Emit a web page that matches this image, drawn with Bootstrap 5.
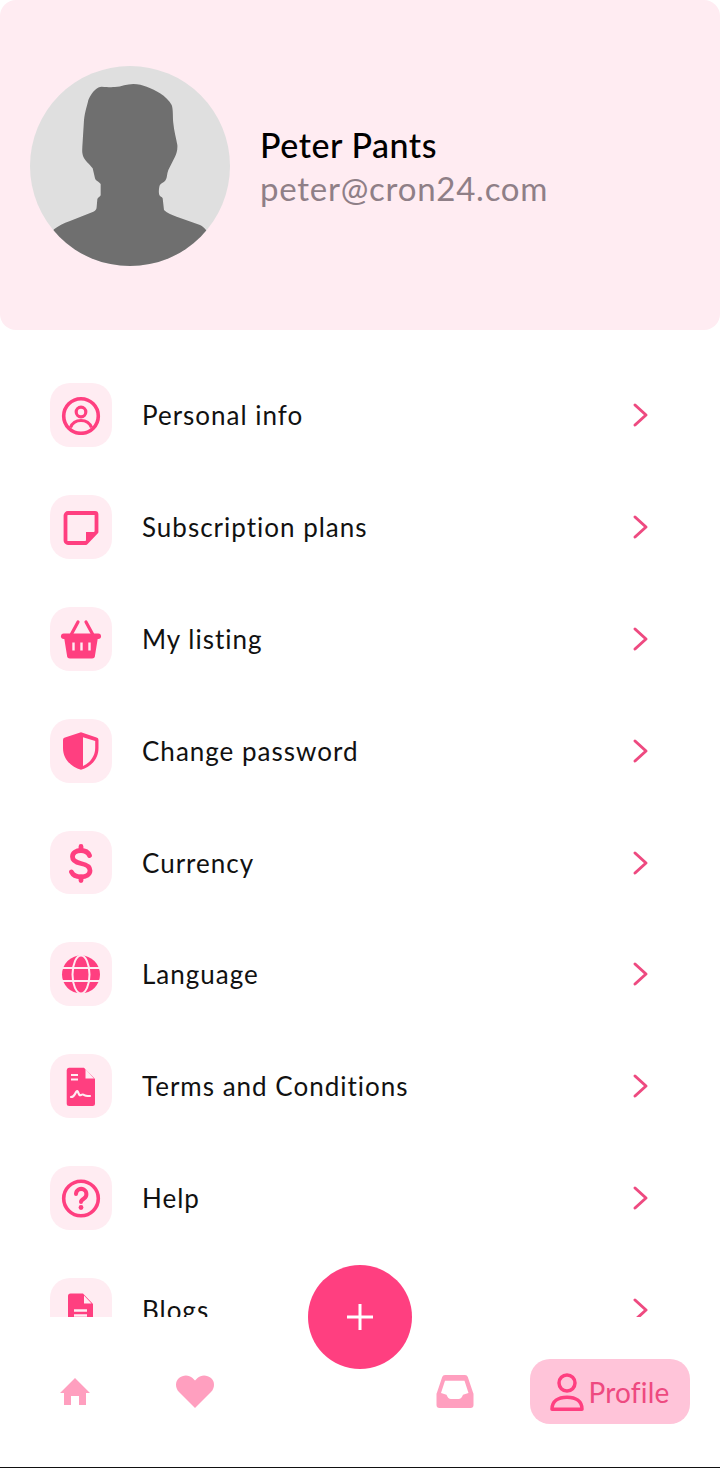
<!DOCTYPE html>
<html lang="en">
<head>
    <meta charset="UTF-8">
    <meta name="viewport" content="width=device-width, initial-scale=1.0">
    <title>Profile</title>
    <link href="https://cdn.jsdelivr.net/npm/bootstrap@5.3.0/dist/css/bootstrap.min.css" rel="stylesheet">
    <style>
        html, body { height: 100%; }
        body { font-family: "Lato", "Noto Sans", sans-serif; background: #fff; color: #111; }
        .app-shell { height: 1468px; border-bottom: 1px solid #111; position: relative; overflow: hidden; }
        .profile-head { height: 330px; background: #ffecf2; border-radius: 16px; padding: 66px 30px 0; }
        .head-inner { gap: 30px; }
        .avatar-pic { width: 200px; height: 200px; flex: none; display: block; border-radius: 50%; }
        .head-name { font-size: 34px; line-height: 44px; color: #000; font-weight: 500; letter-spacing: .55px; }
        .head-mail { font-size: 33px; line-height: 42px; color: #8f7f87; letter-spacing: .75px; }
        .menu-area { height: 987px; overflow: hidden; padding: 53px 70px 0 50px; }
        .menu-line { height: 63.9px; margin-bottom: 48px; gap: 30px; }
        .menu-tile { width: 62px; height: 63.9px; flex: none; background: #ffecf2; border-radius: 20px; }
        .menu-text { font-size: 26px; letter-spacing: 1px; color: #111; padding-top: 1px; }
        .menu-go { width: 20px; height: 26px; flex: none; }
        .bottom-bar { height: 150px; padding: 42px 30px 0; gap: 30px; }
        .bar-cell { width: 90px; height: 65px; }
        .bar-gap { width: 110px; }
        .bar-pill { width: 160px; height: 65px; background: #ffc4d9; border-radius: 20px; gap: 4px; color: #ee4a80; font-size: 28px; letter-spacing: .2px; }
        .add-btn { position: absolute; left: 308px; top: 1265px; width: 104px; height: 104px; background: #ff3f80; border-radius: 50%; }
    </style>
</head>
<body>
    <div class="app-shell">
        <div class="profile-head">
            <div class="head-inner d-flex align-items-center">
                <svg class="avatar-pic" viewBox="0 0 600 600">
                    <rect width="600" height="600" fill="#dfdfdf"/>
                    <path fill="#6f6f6f" d="M72 490C85 480 100 472 120 465L190 437C198 433 200 428 200 422L202 400C203 394 212 392 212 387L212 354C205 345 197 345 195 337L188 307C180 295 165 285 160 272C155 260 157 250 157 242L162 162C165 135 172 118 175 102C180 90 188 78 195 72C203 65 208 62 215 62C230 63 242 64 255 63C275 62 290 54 310 54C325 54 338 58 350 62C365 68 378 74 390 82C405 92 418 104 425 117C430 130 428 155 430 172C432 195 438 215 442 237C443 250 440 262 435 272L415 312C410 325 412 335 407 342C402 350 390 352 388 362C386 372 386 382 388 387C390 392 396 392 398 397L402 432C410 440 425 447 440 452L510 477C518 481 523 486 528 492L600 600H0Z"/>
                </svg>
                <div>
                    <div class="head-name">Peter Pants</div>
                    <div class="head-mail">peter@cron24.com</div>
                </div>
            </div>
        </div>

        <div class="menu-area">
            <div class="menu-line d-flex align-items-center">
                <div class="menu-tile d-flex align-items-center justify-content-center">
                    <svg width="40" height="40" viewBox="0 0 40 40" fill="none" stroke="#ff3f80" stroke-width="3.600">
                        <circle cx="20" cy="21" r="17.300"/>
                        <circle cx="20" cy="17" r="4.800" stroke-width="3.200"/>
                        <path stroke-width="3.200" d="M9.500 32.500c2-5 6-7 10.500-7s8.500 2 10.500 7"/>
                    </svg>
                </div>
                <div class="menu-text flex-grow-1">Personal info</div>
                <svg class="menu-go" viewBox="0 0 20 26" fill="none" stroke="#ee4a80" stroke-width="3" stroke-linecap="round" stroke-linejoin="round"><path d="M5 3l11 10-11 10"/></svg>
            </div>
            <div class="menu-line d-flex align-items-center">
                <div class="menu-tile d-flex align-items-center justify-content-center">
                    <svg width="40" height="40" viewBox="0 0 40 40">
                        <path fill="none" stroke="#ff3f80" stroke-width="3.800" stroke-linejoin="round" d="M7 6h27a1.500 1.500 0 0 1 1.500 1.500V25L25 36H7a2.500 2.500 0 0 1-2.500-2.500V8.500A2.500 2.500 0 0 1 7 6z"/>
                        <path fill="#ff3f80" d="M25 25h12L25 37.500z"/>
                    </svg>
                </div>
                <div class="menu-text flex-grow-1">Subscription plans</div>
                <svg class="menu-go" viewBox="0 0 20 26" fill="none" stroke="#ee4a80" stroke-width="3" stroke-linecap="round" stroke-linejoin="round"><path d="M5 3l11 10-11 10"/></svg>
            </div>
            <div class="menu-line d-flex align-items-center">
                <div class="menu-tile d-flex align-items-center justify-content-center">
                    <svg width="42" height="40" viewBox="0 0 42 40">
                        <path fill="none" stroke="#ff3f80" stroke-width="3.200" stroke-linecap="round" d="M18 3l-6.500 12M26 3l6.500 12"/>
                        <rect x="1" y="14.500" width="40" height="5.500" rx="2.700" fill="#ff3f80"/>
                        <path fill="#ff3f80" d="M4 18h34l-3 18.500a3 3 0 0 1-3 3H10a3 3 0 0 1-3-3z"/>
                        <path fill="none" stroke="#ffecf2" stroke-width="2.400" d="M13.500 23.500v8M21.500 23.500v8M29.500 23.500v8"/>
                    </svg>
                </div>
                <div class="menu-text flex-grow-1">My listing</div>
                <svg class="menu-go" viewBox="0 0 20 26" fill="none" stroke="#ee4a80" stroke-width="3" stroke-linecap="round" stroke-linejoin="round"><path d="M5 3l11 10-11 10"/></svg>
            </div>
            <div class="menu-line d-flex align-items-center">
                <div class="menu-tile d-flex align-items-center justify-content-center">
                    <svg width="40" height="40" viewBox="0 0 40 40">
                        <path fill="#ff3f80" d="M20 1.200L35.500 6.500a2.500 2.500 0 0 1 2 2.500V17C37.500 28 30 36 20 38.800C10 36 2 28 2 17V9a2.500 2.500 0 0 1 2-2.500z"/>
                        <path fill="#ffecf2" d="M22 6.200L34.200 10V17C34.200 25 29 32 22 35z"/>
                    </svg>
                </div>
                <div class="menu-text flex-grow-1">Change password</div>
                <svg class="menu-go" viewBox="0 0 20 26" fill="none" stroke="#ee4a80" stroke-width="3" stroke-linecap="round" stroke-linejoin="round"><path d="M5 3l11 10-11 10"/></svg>
            </div>
            <div class="menu-line d-flex align-items-center">
                <div class="menu-tile d-flex align-items-center justify-content-center">
                    <svg width="40" height="40" viewBox="0 0 40 40" fill="none" stroke="#ff3f80" stroke-width="4.800" stroke-linecap="round">
                        <path d="M28.500 12.500C27 9 24 7.500 20 7.500C15 7.500 11.500 10 11.500 13.800C11.500 18 15 19.500 20 20.500C25 21.500 29 23 29 27.500C29 31.500 25 33.800 20 33.800C15.500 33.800 12 32.300 10.500 29"/>
                        <path d="M20 3.500V7.500M20 33.800V37.500"/>
                    </svg>
                </div>
                <div class="menu-text flex-grow-1">Currency</div>
                <svg class="menu-go" viewBox="0 0 20 26" fill="none" stroke="#ee4a80" stroke-width="3" stroke-linecap="round" stroke-linejoin="round"><path d="M5 3l11 10-11 10"/></svg>
            </div>
            <div class="menu-line d-flex align-items-center">
                <div class="menu-tile d-flex align-items-center justify-content-center">
                    <svg width="40" height="40" viewBox="0 0 40 40">
                        <circle cx="20" cy="20.500" r="19" fill="#ff3f80"/>
                        <g fill="none" stroke="#ffecf2" stroke-width="2">
                            <ellipse cx="20" cy="20.500" rx="8.500" ry="19"/>
                            <path d="M1 14h38M1 27h38"/>
                        </g>
                    </svg>
                </div>
                <div class="menu-text flex-grow-1">Language</div>
                <svg class="menu-go" viewBox="0 0 20 26" fill="none" stroke="#ee4a80" stroke-width="3" stroke-linecap="round" stroke-linejoin="round"><path d="M5 3l11 10-11 10"/></svg>
            </div>
            <div class="menu-line d-flex align-items-center">
                <div class="menu-tile d-flex align-items-center justify-content-center">
                    <svg width="40" height="40" viewBox="0 0 40 40">
                        <path fill="#ff3f80" d="M8 1.700H23L34 13V37.500a2.500 2.500 0 0 1-2.500 2.500H8.200a2.500 2.500 0 0 1-2.500-2.500V4.200A2.500 2.500 0 0 1 8 1.700z"/>
                        <path fill="#ffecf2" d="M24.500 3L33 12.500H24.500z"/>
                        <g fill="none" stroke="#ffecf2" stroke-width="2.200">
                            <path d="M10 9h7M10 13.500h7"/>
                            <path d="M10 31c2 0 3-1 4-3s2-4 3-2 1 4 3 3 2-1 3 0 3 1 6 1" stroke-linecap="round"/>
                        </g>
                    </svg>
                </div>
                <div class="menu-text flex-grow-1">Terms and Conditions</div>
                <svg class="menu-go" viewBox="0 0 20 26" fill="none" stroke="#ee4a80" stroke-width="3" stroke-linecap="round" stroke-linejoin="round"><path d="M5 3l11 10-11 10"/></svg>
            </div>
            <div class="menu-line d-flex align-items-center">
                <div class="menu-tile d-flex align-items-center justify-content-center">
                    <svg width="40" height="40" viewBox="0 0 40 40" fill="none" stroke="#ff3f80" stroke-width="3.600">
                        <circle cx="20" cy="20.500" r="17.300"/>
                        <path stroke-linecap="round" stroke-width="4" d="M15 16a5.200 5.200 0 1 1 8 4.500c-2 1.300-3 2-3 3.500"/>
                        <circle cx="20" cy="29.500" r="2.400" fill="#ff3f80" stroke="none"/>
                    </svg>
                </div>
                <div class="menu-text flex-grow-1">Help</div>
                <svg class="menu-go" viewBox="0 0 20 26" fill="none" stroke="#ee4a80" stroke-width="3" stroke-linecap="round" stroke-linejoin="round"><path d="M5 3l11 10-11 10"/></svg>
            </div>
            <div class="menu-line d-flex align-items-center">
                <div class="menu-tile d-flex align-items-center justify-content-center">
                    <svg width="40" height="40" viewBox="0 0 40 40">
                        <path fill="#ff3f80" d="M9.500 3.500H22L32 14V36a2.500 2.500 0 0 1-2.500 2.500H9.500A2.500 2.500 0 0 1 7 36V6a2.500 2.500 0 0 1 2.500-2.500z"/>
                        <path fill="#ffecf2" d="M23 5.500L30.500 13.500H23z"/>
                        <path fill="none" stroke="#ffecf2" stroke-width="2.500" d="M13 20.500h13M13 25.500h13"/>
                    </svg>
                </div>
                <div class="menu-text flex-grow-1">Blogs</div>
                <svg class="menu-go" viewBox="0 0 20 26" fill="none" stroke="#ee4a80" stroke-width="3" stroke-linecap="round" stroke-linejoin="round"><path d="M5 3l11 10-11 10"/></svg>
            </div>
        </div>

        <div class="bottom-bar d-flex">
            <div class="bar-cell d-flex align-items-center justify-content-center">
                <svg width="30" height="27" viewBox="0 0 30 27"><path fill="#ff9fbf" d="M15 0L30 15h-4v12h-7v-9h-8v9H4V15H0z"/></svg>
            </div>
            <div class="bar-cell d-flex align-items-center justify-content-center">
                <svg width="38" height="33" viewBox="0 0 38 33"><path fill="#ff9fbf" d="M19 33L3 17C-1 12.500-1 6.500 3 3c4-3.500 10-3.500 13.500 0L19 5.500 21.500 3C25-.5 31-.5 35 3c4 3.500 4 9.500 0 14z"/></svg>
            </div>
            <div class="bar-gap"></div>
            <div class="bar-cell d-flex align-items-center justify-content-center">
                <svg width="38" height="33" viewBox="0 0 38 33">
                    <path fill="#ff9fbf" d="M9 0H29a3 3 0 0 1 2.800 2L37 17.500a3 3 0 0 1 .5 2V30a3 3 0 0 1-3 3H3.500a3 3 0 0 1-3-3V19.500a3 3 0 0 1 .5-2L6.200 2A3 3 0 0 1 9 0z"/>
                    <path fill="#fff" d="M9 5.700H28.500L32.500 18 27 19.700C26 22.500 24.500 24 22.500 24H15C13 24 11.500 22.500 10.500 19.700L5 18z"/>
                </svg>
            </div>
            <div class="bar-pill d-flex align-items-center justify-content-center">
                <svg width="34" height="38" viewBox="0 0 34 38" fill="none" stroke="#ff3f80" stroke-width="3.500">
                    <circle cx="17" cy="10" r="8"/>
                    <path stroke-linejoin="round" d="M2 36.200c0-8 6-12 15-12s15 4 15 12z"/>
                </svg>
                <span>Profile</span>
            </div>
        </div>

        <button type="button" class="add-btn btn d-flex align-items-center justify-content-center p-0 border-0" aria-label="Add">
            <svg width="28" height="28" viewBox="0 0 28 28"><path stroke="#fff" stroke-width="3" d="M14 1v26M1 14h26"/></svg>
        </button>
    </div>

    <script src="https://cdn.jsdelivr.net/npm/bootstrap@5.3.0/dist/js/bootstrap.bundle.min.js"></script>
</body>
</html>
